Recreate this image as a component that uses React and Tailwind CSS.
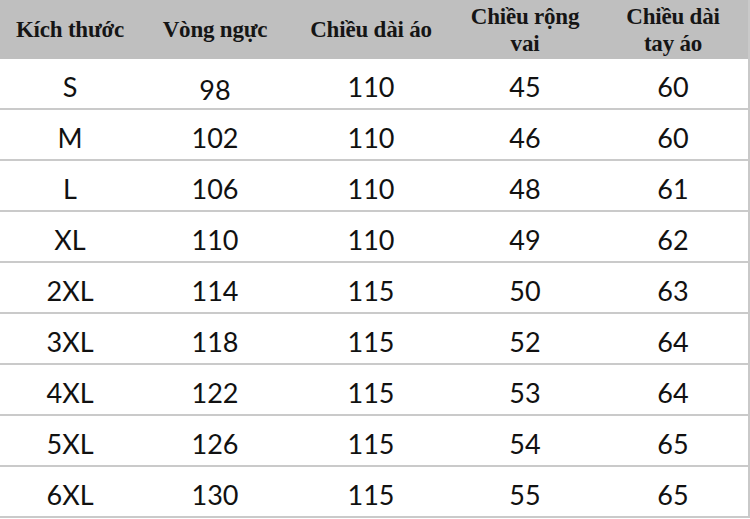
const headers = [
  ['Kích thước'],
  ['Vòng ngực'],
  ['Chiều dài áo'],
  ['Chiều rộng', 'vai'],
  ['Chiều dài', 'tay áo'],
];

const rows = [
  ['S', '98', '110', '45', '60'],
  ['M', '102', '110', '46', '60'],
  ['L', '106', '110', '48', '61'],
  ['XL', '110', '110', '49', '62'],
  ['2XL', '114', '115', '50', '63'],
  ['3XL', '118', '115', '52', '64'],
  ['4XL', '122', '115', '53', '64'],
  ['5XL', '126', '115', '54', '65'],
  ['6XL', '130', '115', '55', '65'],
];

const cols = 'grid grid-cols-[140px_150px_162px_146px_150px]';

export default function App() {
  return (
    <div className="h-[519px] w-[750px] overflow-hidden bg-white">
      <div className="w-[750px] border-r-2 border-[#c9c9c9]">
        <div className={`${cols} h-[59px] items-center bg-[#bfbfbf] text-[23px] font-bold leading-[27px] tracking-[-0.2px] text-[#151515] [font-family:'Liberation_Serif',serif]`}>
          {headers.map((lines, i) => (
            <div key={i} className="text-center">
              {lines.map((l) => (
                <div key={l}>{l}</div>
              ))}
            </div>
          ))}
        </div>
        {rows.map((r) => (
          <div
            key={r[0]}
            className={`${cols} h-[51px] items-center border-b-2 border-[#cacaca] pt-[6px] text-[27px] leading-[30px] text-[#111] [font-family:Lato,sans-serif]`}
          >
            {r.map((c, i) => (
              <div key={i} className={`text-center ${i === 1 && c === '98' ? 'pt-[6px]' : ''}`}>
                {c}
              </div>
            ))}
          </div>
        ))}
      </div>
    </div>
  );
}
